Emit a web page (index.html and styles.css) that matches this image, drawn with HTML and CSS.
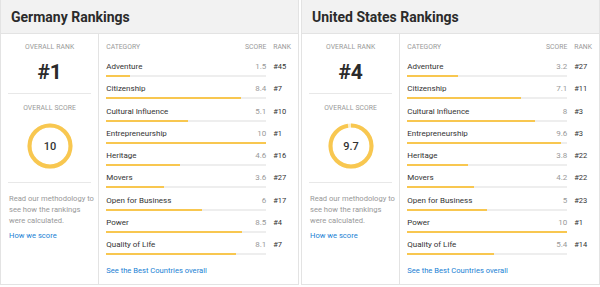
FILE: index.html
```html
<!DOCTYPE html>
<html>
<head>
<meta charset="utf-8">
<link rel="stylesheet" href="styles.css">
</head>
<body>
<div class="wrap">
  <div class="panel">
    <div class="head">Germany Rankings</div>
    <div class="body">
      <div class="side">
        <div class="label">OVERALL RANK</div>
        <div class="big">#1</div>
        <div class="sep"></div>
        <div class="label l2">OVERALL SCORE</div>
        <svg class="ring" width="46" height="46" viewBox="0 0 46 46">
          <circle cx="23" cy="23" r="20.5" fill="none" stroke="#fbeec8" stroke-width="4"/>
          <circle cx="23" cy="23" r="20.5" fill="none" stroke="#f8c750" stroke-width="4" stroke-dasharray="128.8 200" transform="rotate(-90 23 23)"/>
          <text x="23" y="27" text-anchor="middle" class="ringtxt">10</text>
        </svg>
        <div class="sep s2"></div>
        <p class="method">Read our methodology to<br>see how the rankings<br>were calculated.</p>
        <a class="link">How we score</a>
      </div>
      <div class="table">
        <div class="thead"><span class="cat">CATEGORY</span><span class="sc">SCORE</span><span class="rk">RANK</span></div>
        <div class="row"><div class="main"><div class="line"><span>Adventure</span><span class="val">1.5</span></div><div class="track"><div class="fill" style="width:15%"></div></div></div><span class="rank">#45</span></div>
        <div class="row"><div class="main"><div class="line"><span>Citizenship</span><span class="val">8.4</span></div><div class="track"><div class="fill" style="width:84%"></div></div></div><span class="rank">#7</span></div>
        <div class="row"><div class="main"><div class="line"><span>Cultural Influence</span><span class="val">5.1</span></div><div class="track"><div class="fill" style="width:51%"></div></div></div><span class="rank">#10</span></div>
        <div class="row"><div class="main"><div class="line"><span>Entrepreneurship</span><span class="val">10</span></div><div class="track"><div class="fill" style="width:100%"></div></div></div><span class="rank">#1</span></div>
        <div class="row"><div class="main"><div class="line"><span>Heritage</span><span class="val">4.6</span></div><div class="track"><div class="fill" style="width:46%"></div></div></div><span class="rank">#16</span></div>
        <div class="row"><div class="main"><div class="line"><span>Movers</span><span class="val">3.6</span></div><div class="track"><div class="fill" style="width:36%"></div></div></div><span class="rank">#27</span></div>
        <div class="row"><div class="main"><div class="line"><span>Open for Business</span><span class="val">6</span></div><div class="track"><div class="fill" style="width:60%"></div></div></div><span class="rank">#17</span></div>
        <div class="row"><div class="main"><div class="line"><span>Power</span><span class="val">8.5</span></div><div class="track"><div class="fill" style="width:85%"></div></div></div><span class="rank">#4</span></div>
        <div class="row"><div class="main"><div class="line"><span>Quality of Life</span><span class="val">8.1</span></div><div class="track"><div class="fill" style="width:81%"></div></div></div><span class="rank">#7</span></div>
        <a class="link all">See the Best Countries overall</a>
      </div>
    </div>
  </div>
  <div class="panel">
    <div class="head">United States Rankings</div>
    <div class="body">
      <div class="side">
        <div class="label">OVERALL RANK</div>
        <div class="big">#4</div>
        <div class="sep"></div>
        <div class="label l2">OVERALL SCORE</div>
        <svg class="ring" width="46" height="46" viewBox="0 0 46 46">
          <circle cx="23" cy="23" r="20.5" fill="none" stroke="#fbeec8" stroke-width="4"/>
          <circle cx="23" cy="23" r="20.5" fill="none" stroke="#f8c750" stroke-width="4" stroke-dasharray="124.9 200" transform="rotate(-90 23 23)"/>
          <text x="23" y="27" text-anchor="middle" class="ringtxt">9.7</text>
        </svg>
        <div class="sep s2"></div>
        <p class="method">Read our methodology to<br>see how the rankings<br>were calculated.</p>
        <a class="link">How we score</a>
      </div>
      <div class="table">
        <div class="thead"><span class="cat">CATEGORY</span><span class="sc">SCORE</span><span class="rk">RANK</span></div>
        <div class="row"><div class="main"><div class="line"><span>Adventure</span><span class="val">3.2</span></div><div class="track"><div class="fill" style="width:32%"></div></div></div><span class="rank">#27</span></div>
        <div class="row"><div class="main"><div class="line"><span>Citizenship</span><span class="val">7.1</span></div><div class="track"><div class="fill" style="width:71%"></div></div></div><span class="rank">#11</span></div>
        <div class="row"><div class="main"><div class="line"><span>Cultural Influence</span><span class="val">8</span></div><div class="track"><div class="fill" style="width:80%"></div></div></div><span class="rank">#3</span></div>
        <div class="row"><div class="main"><div class="line"><span>Entrepreneurship</span><span class="val">9.6</span></div><div class="track"><div class="fill" style="width:96%"></div></div></div><span class="rank">#3</span></div>
        <div class="row"><div class="main"><div class="line"><span>Heritage</span><span class="val">3.8</span></div><div class="track"><div class="fill" style="width:38%"></div></div></div><span class="rank">#22</span></div>
        <div class="row"><div class="main"><div class="line"><span>Movers</span><span class="val">4.2</span></div><div class="track"><div class="fill" style="width:42%"></div></div></div><span class="rank">#22</span></div>
        <div class="row"><div class="main"><div class="line"><span>Open for Business</span><span class="val">5</span></div><div class="track"><div class="fill" style="width:50%"></div></div></div><span class="rank">#23</span></div>
        <div class="row"><div class="main"><div class="line"><span>Power</span><span class="val">10</span></div><div class="track"><div class="fill" style="width:100%"></div></div></div><span class="rank">#1</span></div>
        <div class="row"><div class="main"><div class="line"><span>Quality of Life</span><span class="val">5.4</span></div><div class="track"><div class="fill" style="width:54%"></div></div></div><span class="rank">#14</span></div>
        <a class="link all">See the Best Countries overall</a>
      </div>
    </div>
  </div>
</div>
</body>
</html>
```

FILE: styles.css
```css
* { box-sizing: border-box; }
html, body { margin: 0; padding: 0; background: #fff; }
body { font-family: Roboto, "Liberation Sans", sans-serif; color: #333; }
.wrap { display: flex; gap: 2px; width: 600px; }
.panel { width: 299px; height: 285px; border: 1px solid #e3e3e3; border-top: none; display: flex; flex-direction: column; }
.head { height: 34px; background: #f2f2f2; border-bottom: 1px solid #e3e3e3; font-size: 14px; font-weight: 700; line-height: 34px; padding-left: 10px; color: #2b2b2b; }
.body { display: flex; flex: 1; }
.side { width: 99px; border-right: 1px solid #e3e3e3; padding: 8px 7px 0 7px; display: flex; flex-direction: column; align-items: center; }
.label { font-size: 6.8px; line-height: 10px; color: #999; letter-spacing: 0.1px; }
.l2 { margin-top: 8.5px; }
.big { font-size: 21px; font-weight: 700; line-height: 26px; margin-top: 6.5px; color: #2b2b2b; }
.sep { width: 100%; height: 1px; background: #e8e8e8; margin-top: 8.5px; }
.s2 { margin-top: 13.5px; }
.ring { display: block; margin-top: 10px; }
.ringtxt { font-family: Roboto, "Liberation Sans", sans-serif; font-size: 11px; font-weight: 500; fill: #333; }
.method { align-self: stretch; margin: 9.5px -6px 0 1px; font-size: 7.6px; line-height: 11px; color: #999; white-space: nowrap; }
.link { align-self: stretch; font-size: 7.6px; line-height: 11px; color: #1a7fd4; margin-top: 4px; margin-left: 1px; }
.table { flex: 1; padding: 8px 7px 0 7px; display: flex; flex-direction: column; }
.thead { display: flex; font-size: 6.8px; line-height: 10px; color: #999; margin-bottom: 9px; }
.thead .cat { width: 138px; }
.thead .sc { width: 22px; text-align: right; }
.thead .rk { margin-left: 7px; }
.row { display: flex; height: 22.3px; }
.main { width: 160px; }
.line { display: flex; justify-content: space-between; font-size: 8px; line-height: 12px; color: #333; }
.val { color: #999; }
.track { height: 2px; background: #eee; margin-top: 2px; }
.fill { height: 2px; background: #f8c750; }
.rank { margin-left: 7px; font-size: 7.5px; line-height: 12px; color: #333; font-weight: 400; }
.all { margin-top: 3.5px; margin-left: 0; }
```
